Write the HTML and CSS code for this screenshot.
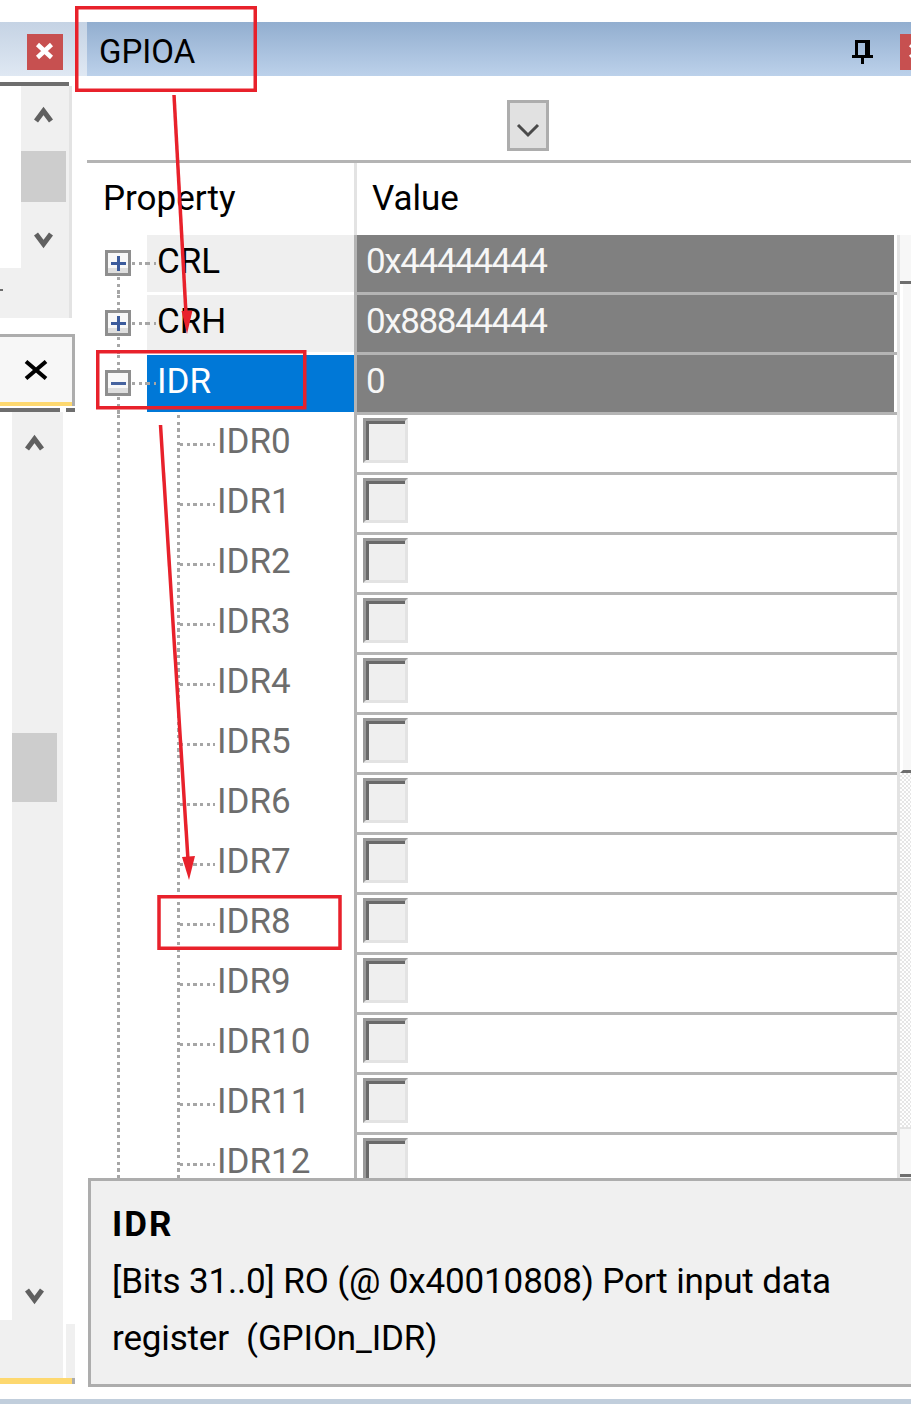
FILE: index.html
```html
<!DOCTYPE html>
<html>
<head>
<meta charset="utf-8">
<title>GPIOA</title>
<link rel="stylesheet" href="styles.css">
</head>
<body>
<div class="screen">
  <div class="topgap"></div>
  <div class="workspace">
    <aside class="side">
      <div class="side-title">
        <span class="closebtn"><svg width="36" height="36" viewBox="0 0 36 36"><path d="M10.5 10.5L24.5 23.5M24.5 10.5L10.5 23.5" stroke="#fff" stroke-width="4.5" fill="none"/></svg></span>
      </div>
      <div class="side-gap1"></div>
      <div class="side-rule1"></div>
      <div class="side-box1">
        <div class="side-pane"><div class="pane-white"></div><div class="pane-mark"></div></div>
        <div class="vscroll-a">
          <svg class="chev" width="21" height="17" viewBox="0 0 21 17"><polyline points="3,15 10.5,5 18,15" fill="none" stroke="#606060" stroke-width="5"/></svg>
          <div class="thumb-a"></div>
          <svg class="chev chev-down-a" width="21" height="18" viewBox="0 0 21 18"><polyline points="3,2 10.5,12 18,2" fill="none" stroke="#606060" stroke-width="5"/></svg>
        </div>
      </div>
      <div class="side-gap2"></div>
      <div class="side-tab">
        <svg width="24" height="20" viewBox="0 0 24 20"><path d="M2 1.5L22 18.5M22 1.5L2 18.5" stroke="#000" stroke-width="4" fill="none"/></svg>
      </div>
      <div class="side-yellow"></div>
      <div class="side-gap3"></div>
      <div class="side-rule2"><span class="r2a"></span><span class="r2b"></span></div>
      <div class="side-box2">
        <div class="vscroll-b">
          <svg class="chev" width="21" height="18" viewBox="0 0 21 18"><polyline points="3,16 10.5,6 18,16" fill="none" stroke="#606060" stroke-width="5"/></svg>
          <div class="thumb-b"></div>
          <svg class="chev chev-down-b" width="21" height="17" viewBox="0 0 21 17"><polyline points="3,2 10.5,12 18,2" fill="none" stroke="#606060" stroke-width="5"/></svg>
        </div>
      </div>
      <div class="side-foot"><span class="foot-a"></span><span class="foot-b"></span><span class="foot-c"></span></div>
      <div class="side-yellow2"></div>
    </aside>

    <section class="panel">
      <header class="panel-title">
        <span class="title-text">GPIOA</span>
        <span class="pin"><svg width="21" height="24" viewBox="0 0 21 24"><path d="M3 0H18V15H3Z M6 3H13V15H6Z" fill="#000" fill-rule="evenodd"/><rect x="0" y="15" width="21" height="3" fill="#000"/><rect x="9" y="18" width="3" height="6" fill="#000"/></svg></span>
        <span class="closebtn closebtn-r"><svg width="36" height="36" viewBox="0 0 36 36"><path d="M10.5 10.5L24.5 23.5M24.5 10.5L10.5 23.5" stroke="#fff" stroke-width="4.5" fill="none"/></svg></span>
      </header>
      <div class="toolbar">
        <div class="dropdown"><svg width="24" height="16" viewBox="0 0 24 16"><polyline points="2,3 12,13 22,3" fill="none" stroke="#4a4a4a" stroke-width="3"/></svg></div>
      </div>
      <div class="grid-head">
        <div class="head-name">Property</div>
        <div class="head-value">Value</div>
      </div>
      <div class="grid-body">
        <div class="rows">
          <div class="row top first">
            <div class="gutter"><svg class="exp" width="26" height="26" viewBox="0 0 26 26"><rect x="1.5" y="1.5" width="23" height="23" fill="#f8f8f8" stroke="#8e8e8e" stroke-width="3"/><rect x="3" y="18" width="20" height="5" fill="#dedede"/><path d="M6 13.5H21M13.5 6V21" stroke="#3b5b9c" stroke-width="3"/></svg></div>
            <div class="label">CRL</div>
            <div class="value"><div class="val-fill">0x44444444</div></div>
          </div>
          <div class="row top">
            <div class="gutter"><svg class="exp" width="26" height="26" viewBox="0 0 26 26"><rect x="1.5" y="1.5" width="23" height="23" fill="#f8f8f8" stroke="#8e8e8e" stroke-width="3"/><rect x="3" y="18" width="20" height="5" fill="#dedede"/><path d="M6 13.5H21M13.5 6V21" stroke="#3b5b9c" stroke-width="3"/></svg></div>
            <div class="label">CRH</div>
            <div class="value"><div class="val-fill">0x88844444</div></div>
          </div>
          <div class="row top selected">
            <div class="gutter"><svg class="exp" width="26" height="26" viewBox="0 0 26 26"><rect x="1.5" y="1.5" width="23" height="23" fill="#f8f8f8" stroke="#8e8e8e" stroke-width="3"/><rect x="3" y="18" width="20" height="5" fill="#dedede"/><path d="M6 13.5H21" stroke="#46639f" stroke-width="3"/></svg></div>
            <div class="label">IDR</div>
            <div class="value"><div class="val-fill">0</div></div>
          </div>
          <div class="row child"><div class="gutter"></div><div class="label">IDR0</div><div class="value"><span class="check"></span></div></div>
          <div class="row child"><div class="gutter"></div><div class="label">IDR1</div><div class="value"><span class="check"></span></div></div>
          <div class="row child"><div class="gutter"></div><div class="label">IDR2</div><div class="value"><span class="check"></span></div></div>
          <div class="row child"><div class="gutter"></div><div class="label">IDR3</div><div class="value"><span class="check"></span></div></div>
          <div class="row child"><div class="gutter"></div><div class="label">IDR4</div><div class="value"><span class="check"></span></div></div>
          <div class="row child"><div class="gutter"></div><div class="label">IDR5</div><div class="value"><span class="check"></span></div></div>
          <div class="row child"><div class="gutter"></div><div class="label">IDR6</div><div class="value"><span class="check"></span></div></div>
          <div class="row child"><div class="gutter"></div><div class="label">IDR7</div><div class="value"><span class="check"></span></div></div>
          <div class="row child"><div class="gutter"></div><div class="label">IDR8</div><div class="value"><span class="check"></span></div></div>
          <div class="row child"><div class="gutter"></div><div class="label">IDR9</div><div class="value"><span class="check"></span></div></div>
          <div class="row child"><div class="gutter"></div><div class="label">IDR10</div><div class="value"><span class="check"></span></div></div>
          <div class="row child"><div class="gutter"></div><div class="label">IDR11</div><div class="value"><span class="check"></span></div></div>
          <div class="row child"><div class="gutter"></div><div class="label">IDR12</div><div class="value"><span class="check"></span></div></div>
        </div>
        <div class="gscroll">
          <div class="gs-up"></div>
          <div class="gs-thumb"></div>
          <div class="gs-track"></div>
          <div class="gs-down"></div>
        </div>
      </div>
    </section>
  </div>
  <div class="statusline"></div>

  <div class="tooltip">
    <div class="tt-title">IDR</div>
    <div class="tt-line">[Bits 31..0] RO (@ 0x40010808) Port input data</div>
    <div class="tt-line">register&nbsp; (GPIOn_IDR)</div>
  </div>

  <svg class="marks" width="911" height="1404" viewBox="0 0 911 1404">
    <g fill="none" stroke="#e8212b" stroke-width="3.5">
      <rect x="76.75" y="7.75" width="178.5" height="82.5"/>
      <rect x="97.75" y="351.75" width="207" height="56"/>
      <rect x="159" y="896.75" width="181" height="51.5"/>
      <path d="M174 95 L186 314"/>
      <path d="M160.5 425 L188 860"/>
    </g>
    <g fill="#e8212b">
      <polygon points="187,334 181.5,311 192.5,310.5"/>
      <polygon points="189,880 182,857 195,856"/>
    </g>
  </svg>
</div>
</body>
</html>
```

FILE: styles.css
```css
* { box-sizing: border-box; }
html, body { margin: 0; padding: 0; }
body {
  width: 911px;
  height: 1404px;
  overflow: hidden;
  background: #fff;
  font-family: Roboto, "Liberation Sans", sans-serif;
  color: #000;
}
.screen {
  position: relative;
  width: 911px;
  height: 1404px;
  overflow: hidden;
  display: flex;
  flex-direction: column;
}
.topgap { height: 22px; flex: none; }
.workspace { height: 1377px; flex: none; display: flex; }

/* ---------- left docked panel ---------- */
.side { width: 87px; flex: none; display: flex; flex-direction: column; }
.side-title {
  height: 54px;
  flex: none;
  background: linear-gradient(#c5d3e4, #dfe8f3);
  padding: 12px 0 0 27px;
}
.closebtn { display: block; width: 36px; height: 36px; background: #c75050; flex: none; }
.closebtn svg { display: block; }
.side-gap1 { height: 6px; flex: none; }
.side-rule1 { height: 4px; width: 69px; background: #6e6e6e; flex: none; }
.side-box1 {
  height: 232px;
  width: 72px;
  flex: none;
  display: flex;
  background: #f0f0f0;
  border-right: 3px solid #e3e3e3;
}
.side-pane { width: 21px; display: flex; flex-direction: column; }
.pane-white { height: 182px; background: #fff; }
.pane-mark { width: 3px; height: 2px; background: #6d6d6d; margin-top: 21px; }
.vscroll-a {
  width: 45px;
  display: flex;
  flex-direction: column;
  align-items: center;
  padding-top: 20px;
}
.chev { display: block; flex: none; }
.thumb-a { width: 45px; height: 51px; margin-top: 28px; background: #cdcdcd; }
.chev-down-a { margin-top: 30px; }
.side-gap2 { height: 16px; flex: none; }
.side-tab {
  height: 68px;
  width: 75px;
  flex: none;
  background: #f7f7f7;
  border-top: 3px solid #adadad;
  border-right: 3px solid #adadad;
  display: flex;
  align-items: center;
  justify-content: center;
}
.side-yellow { height: 4px; width: 75px; flex: none; background: #fdd86f; border-right: 3px solid #adadad; }
.side-gap3 { height: 2px; flex: none; }
.side-rule2 { height: 4px; width: 75px; flex: none; display: flex; }
.r2a { width: 60px; background: #6e6e6e; }
.r2b { width: 9px; margin-left: 6px; background: #6e6e6e; }
.side-box2 { height: 908px; flex: none; display: flex; padding-left: 12px; }
.vscroll-b {
  width: 51px;
  background: #f0f0f0;
  padding: 21px 6px 0 0;
  display: flex;
  flex-direction: column;
  align-items: center;
}
.thumb-b { width: 45px; height: 69px; margin-top: 282px; background: #cdcdcd; flex: none; }
.chev-down-b { margin-top: 486px; }
.side-foot { height: 58px; flex: none; display: flex; }
.foot-a { width: 63px; background: #f0f0f0; }
.foot-b { width: 3px; }
.foot-c { width: 9px; background: #f0f0f0; margin-top: 4px; }
.side-yellow2 { height: 6px; width: 75px; flex: none; background: #fdd86f; border-right: 3px solid #adadad; }

/* ---------- main property panel ---------- */
.panel {
  width: 824px;
  flex: none;
  display: flex;
  flex-direction: column;
  overflow: hidden;
}
.panel-title {
  height: 54px;
  flex: none;
  display: flex;
  align-items: flex-start;
  background: linear-gradient(#92aecf, #bcd1ea);
}
.title-text {
  flex: 1;
  padding: 5px 0 0 12px;
  font-size: 33px;
  line-height: 49px;
}
.pin { display: block; width: 21px; height: 24px; margin: 18px 27px 0 0; flex: none; }
.pin svg { display: block; }
.closebtn-r { margin: 12px -25px 0 0; }
.toolbar {
  height: 87px;
  flex: none;
  padding: 24px 0 0 420px;
  border-bottom: 3px solid #b4b4b4;
}
.dropdown {
  width: 42px;
  height: 51px;
  background: #e1e1e1;
  border: 3px solid #adadad;
  display: flex;
  justify-content: center;
  padding-top: 19px;
}
.dropdown svg { display: block; }
.grid-head {
  height: 72px;
  flex: none;
  display: flex;
  font-size: 35px;
  line-height: 72px;
}
.head-name { width: 267px; padding-left: 16px; flex: none; }
.head-value { flex: 1; border-left: 3px solid #e3e3e3; padding-left: 15px; }

.grid-body { height: 1152px; flex: none; display: flex; overflow: hidden; }
.rows {
  --vdots: repeating-linear-gradient(to bottom, #a6a6a6 0 3.33px, transparent 3.33px 6.67px);
  width: 810px;
  flex: none;
  background: var(--vdots) 90px 0 / 3px 100% no-repeat;
}
.row {
  --vdots: repeating-linear-gradient(to bottom, #a6a6a6 0 3.33px, transparent 3.33px 6.67px);
  --hdots: repeating-linear-gradient(to right, #a6a6a6 0 3.33px, transparent 3.33px 6.67px);
  height: 60px;
  display: flex;
  align-items: flex-start;
  font-size: 35px;
  line-height: 53px;
  background: #fff;
}
.gutter { width: 60px; height: 60px; flex: none; }
.exp { display: block; margin: 15px 0 0 18px; }
.row.top .gutter {
  background:
    var(--hdots) 45px 27px / 15px 3px no-repeat,
    var(--vdots) 30px 42px / 3px 18px no-repeat,
    var(--vdots) 30px 0 / 3px 15px no-repeat;
}
.row.top.first .gutter {
  background:
    var(--hdots) 45px 27px / 15px 3px no-repeat,
    var(--vdots) 30px 42px / 3px 18px no-repeat;
}
.row.child .gutter { background: var(--vdots) 30px 0 / 3px 60px no-repeat; }
.label { width: 207px; flex: none; white-space: nowrap; }
.row.top .label {
  height: 57px;
  padding-left: 10px;
  background: var(--hdots) 0 27px / 9px 3px no-repeat, #efefef;
}
.row.top.selected .label {
  background: var(--hdots) 0 27px / 9px 3px no-repeat, #0078d7;
  color: #fff;
}
.row.child .label {
  height: 60px;
  padding-left: 70px;
  color: #6d6d6d;
  background:
    var(--vdots) 30px 0 / 3px 60px no-repeat,
    var(--hdots) 33px 28px / 35px 3px no-repeat;
}
.value {
  flex: 1;
  height: 60px;
  border-left: 3px solid #b4b4b4;
  border-bottom: 3px solid #b4b4b4;
  padding-right: 3px;
}
.val-fill {
  height: 57px;
  background: #808080;
  color: #f6f6f6;
  padding-left: 9px;
  letter-spacing: -1.4px;
}
.check {
  display: block;
  width: 45px;
  height: 45px;
  margin: 3px 0 0 6px;
  border: 3px solid;
  border-color: #9a9a9a #e3e3e3 #e3e3e3 #9a9a9a;
  background: #efefef;
  box-shadow: inset 3px 3px 0 #6a6a6a;
}

.gscroll {
  width: 14px;
  flex: none;
  border-left: 3px solid #e3e3e3;
  background: #f4f4f4;
  display: flex;
  flex-direction: column;
}
.gs-up { height: 49px; flex: none; background: #f7f7f7; border-bottom: 3px solid #6e6e6e; }
.gs-thumb { height: 489px; flex: none; background: #f7f7f7; border-left: 3px solid #fff; border-bottom: 3px solid #6e6e6e; }
.gs-track {
  height: 354px;
  flex: none;
  background: repeating-conic-gradient(#e6e6e6 0 25%, #fff 0 50%) 0 0 / 4px 4px;
}
.gs-down { height: 50px; flex: none; background: #f7f7f7; border-top: 2px solid #e3e3e3; border-bottom: 3px solid #6e6e6e; }

.statusline { height: 5px; flex: none; background: #c1cedc; }

/* ---------- overlays ---------- */
.tooltip {
  position: absolute;
  left: 88px;
  top: 1178px;
  width: 840px;
  height: 209px;
  border: 3px solid #adadad;
  background: #f0f0f0;
  padding: 15px 0 0 21px;
  font-size: 35px;
  line-height: 57px;
  white-space: nowrap;
}
.tt-title { font-weight: bold; letter-spacing: 2px; }
.tt-line { letter-spacing: -0.15px; }
.marks { position: absolute; left: 0; top: 0; pointer-events: none; }
```
